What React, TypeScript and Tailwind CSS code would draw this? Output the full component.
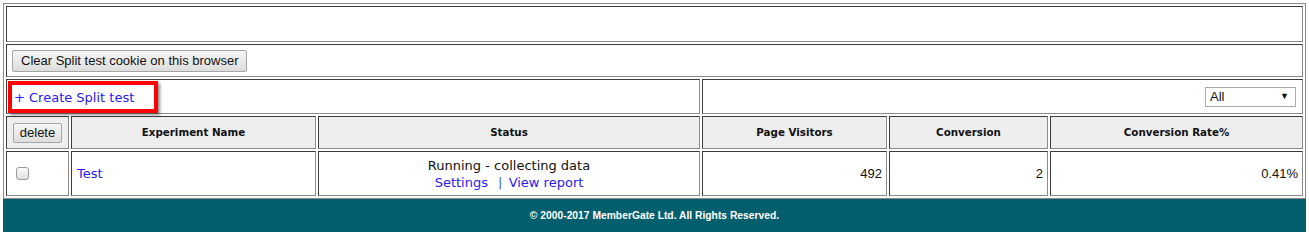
import React from 'react';

const cell = 'border border-t-[#3c3c3c] border-l-[#3c3c3c] border-b-[#8a8a8a] border-r-[#8a8a8a]';
const head = `${cell} bg-[#eeeeee] flex items-center justify-center font-bold text-[10.3px] text-[#111] font-['DejaVu_Sans',sans-serif]`;
const num = `${cell} flex items-center justify-end pr-[4px] text-[13px] text-[#111] font-['Liberation_Sans',Arial,sans-serif]`;
const btn =
  "border border-[#a6a6a6] rounded-[2px] bg-gradient-to-b from-[#f6f6f6] to-[#dddddd] text-[13px] text-[#111] font-['Liberation_Sans',Arial,sans-serif] leading-none";

const App: React.FC = () => {
  return (
    <div className="w-[1309px] h-[237px] bg-white px-[3px] pt-[3px]">
      {/* Split tests table */}
      <div className="border border-[#8a8a8a] p-[2px] grid grid-cols-[63px_245px_382px_185px_159px_1fr] grid-rows-[36px_33px_35px_33px_45px] gap-[2px]">
        <div className={`${cell} col-span-6`} />

        <div className={`${cell} col-span-6 flex items-center pl-[5px]`}>
          <button className={`${btn} h-[22px] px-[8px] text-[13.2px]`}>Clear Split test cookie on this browser</button>
        </div>

        <div className={`${cell} col-span-3 relative flex items-center pl-[7px]`}>
          <span className="text-[13px] text-[#2a1aee] font-['DejaVu_Sans',sans-serif] mt-[2px]">+ Create Split test</span>
          <div className="absolute left-[1px] top-[1px] w-[150px] h-[32px] border-[4px] border-[#ff0000] shadow-[2px_2px_3px_rgba(0,0,0,0.45)] pointer-events-none" />
        </div>
        <div className={`${cell} col-span-3 flex items-center justify-end pr-[6px]`}>
          <div className="w-[91px] h-[20px] border border-[#a9a9a9] bg-white flex items-center justify-between pl-[4px] pr-[6px] text-[13px] text-[#111] font-['Liberation_Sans',Arial,sans-serif]">
            <span>All</span>
            <span className="text-[9px] leading-none">▼</span>
          </div>
        </div>

        <div className={`${cell} bg-[#eeeeee] flex items-center justify-center`}>
          <button className={`${btn} h-[20px] px-[6px]`}>delete</button>
        </div>
        <div className={head}>Experiment Name</div>
        <div className={head}>Status</div>
        <div className={head}>Page Visitors</div>
        <div className={head}>Conversion</div>
        <div className={head}>Conversion Rate%</div>

        <div className={`${cell} flex items-center pl-[9px]`}>
          <span className="w-[13px] h-[13px] rounded-[3px] border border-[#9a9a9a] bg-gradient-to-b from-[#fcfcfc] to-[#dedede]" />
        </div>
        <div className={`${cell} flex items-center pl-[5px] text-[13px] text-[#2a1aee] font-['DejaVu_Sans',sans-serif]`}>
          Test
        </div>
        <div className={`${cell} flex flex-col items-center justify-center text-[13px] leading-[17px] font-['DejaVu_Sans',sans-serif]`}>
          <span className="text-[#111]">Running - collecting data</span>
          <span className="text-[#2a1aee]">
            Settings <span className="ml-[6px] mr-[2px] text-[#3a63b8]">|</span> View report
          </span>
        </div>
        <div className={num}>492</div>
        <div className={num}>2</div>
        <div className={num}>0.41%</div>
      </div>

      <footer className="h-[33px] bg-[#035e6d] flex items-center justify-center text-white text-[10.3px] font-bold font-['Liberation_Sans',Arial,sans-serif]">
        © 2000-2017 MemberGate Ltd. All Rights Reserved.
      </footer>
    </div>
  );
};

export default App;
